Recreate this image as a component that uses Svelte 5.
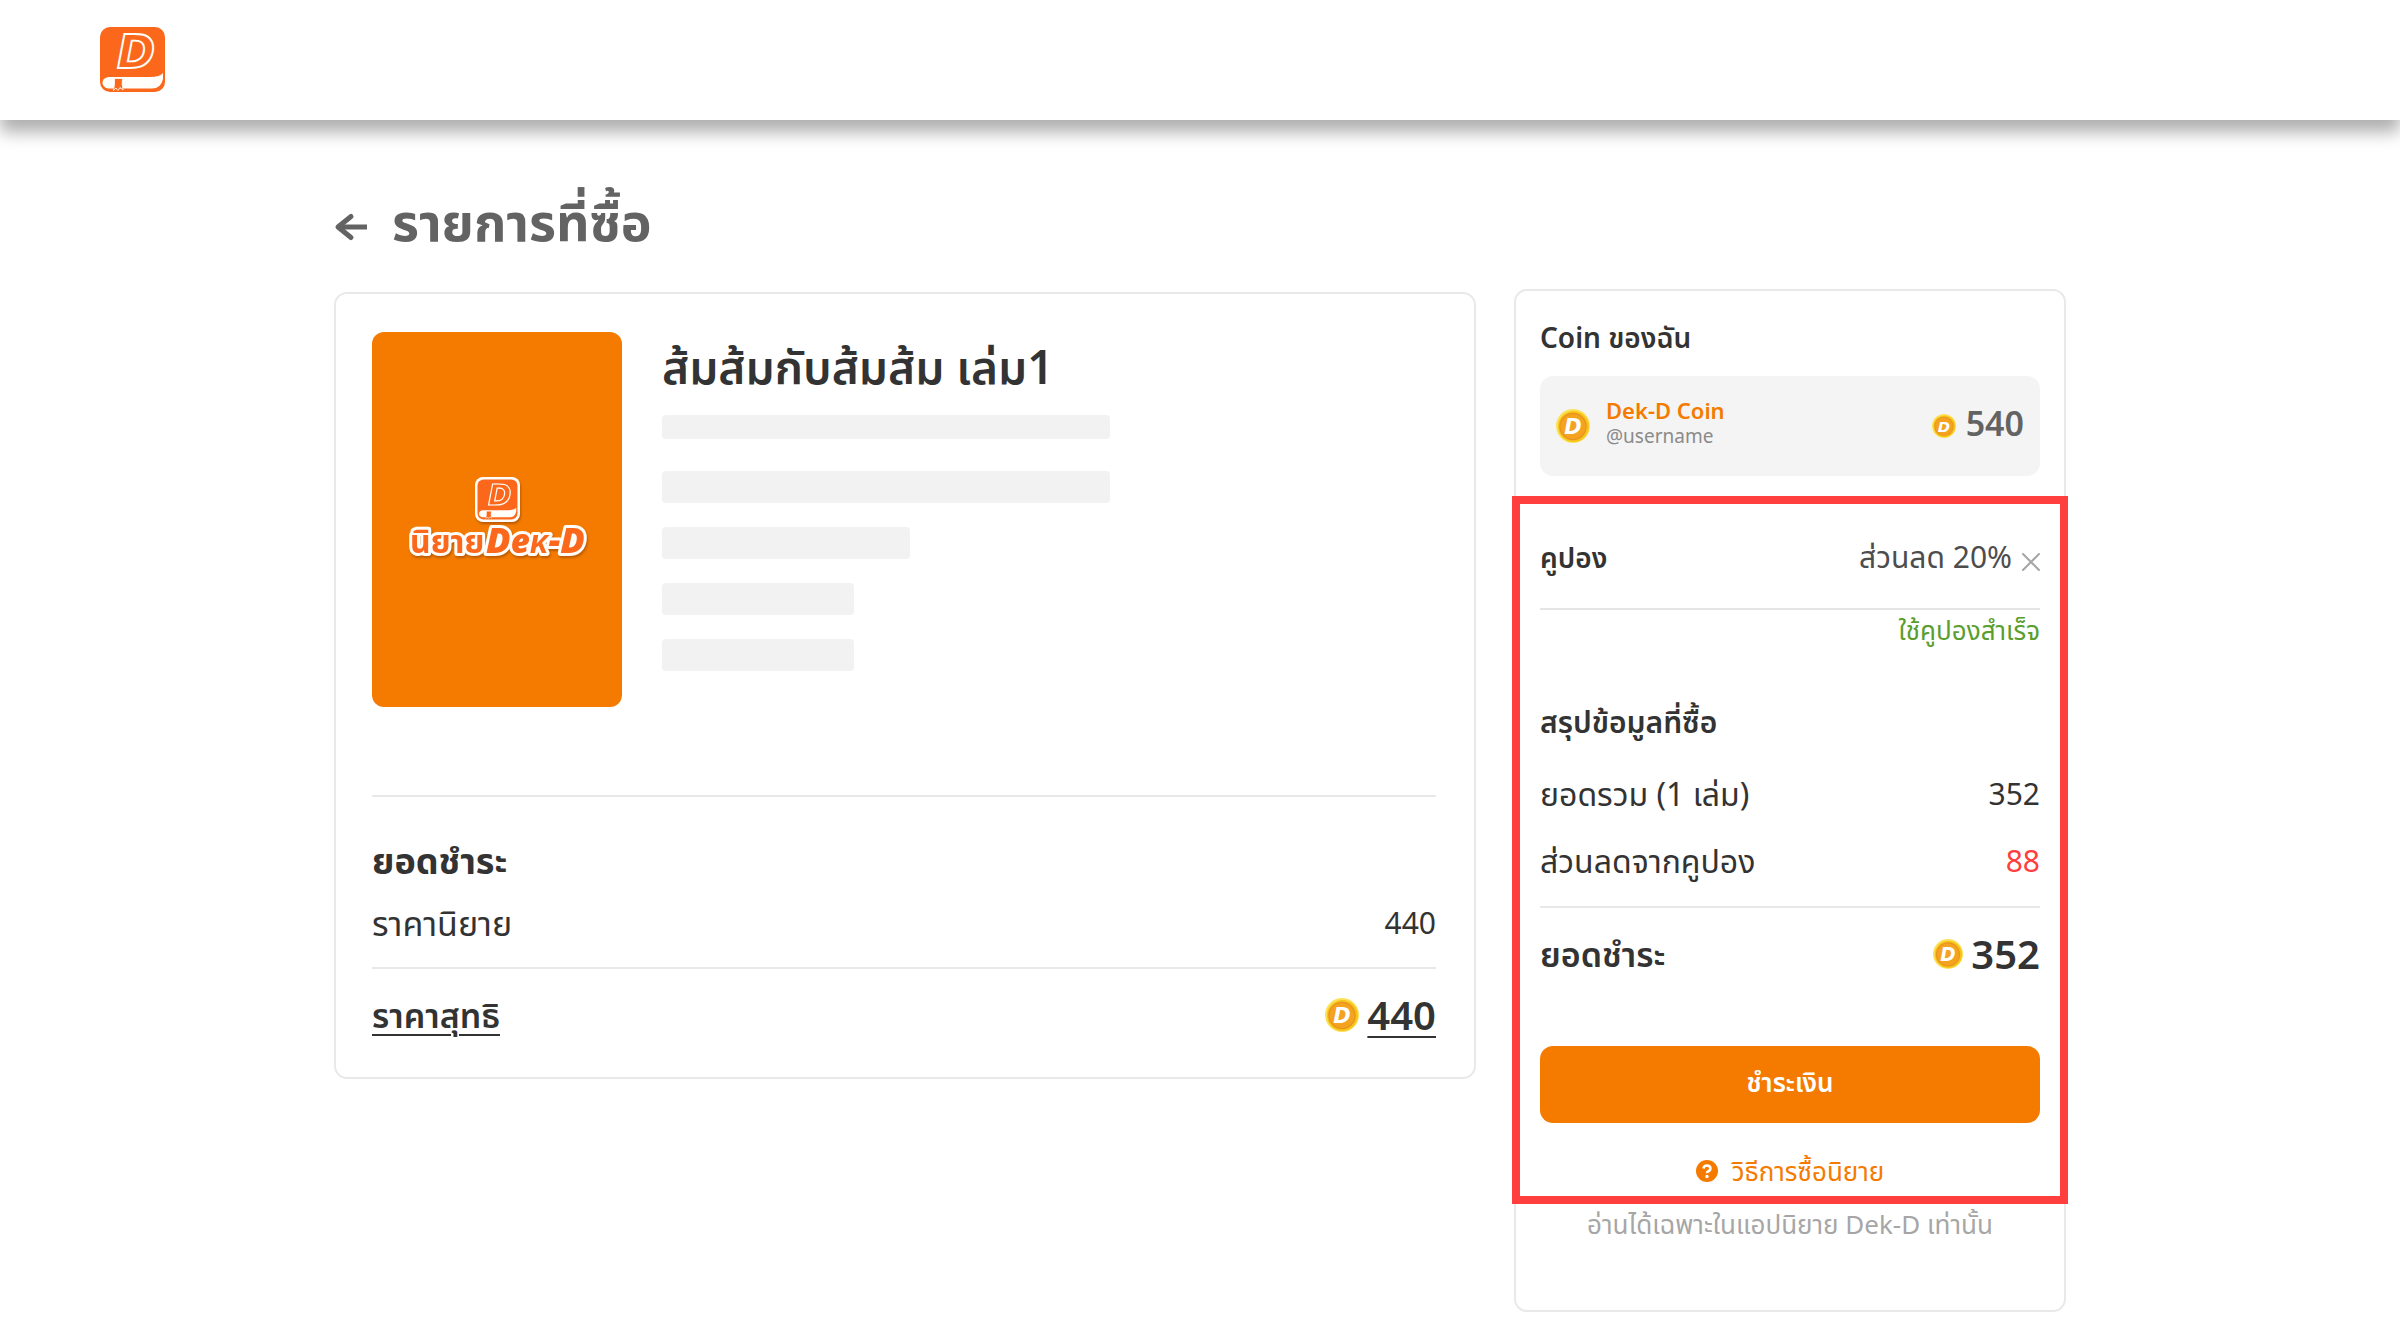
<script lang="ts">
  const placeholders = [
    { width: 448, slim: true },
    { width: 448, slim: false },
    { width: 248, slim: false },
    { width: 192, slim: false },
    { width: 192, slim: false },
  ];
</script>

{#snippet book()}
  <rect width="65" height="65" rx="10" fill="#fb671b" />
  <path d="M8 50H50Q60 50 63 46V52Q61 61.500 52 61.500H8Q2.500 60 2.500 55.700T8 50Z" fill="#fffefb" />
  <path d="M14.500 51.500H22.500Q21.500 57 23 63L20 60.500L18 63.500L16 61L13.500 63.500Q15 57 14.500 51.500Z" fill="#fb671b" stroke="#fffefb" stroke-width="0.800" />
  <text class="mark" x="17" y="41" font-size="46" fill="none" stroke="#fffefb" stroke-width="1.900">D</text>
{/snippet}

{#snippet coin(kind)}
  <svg class="coin {kind}" viewBox="0 0 34 34" aria-hidden="true">
    <circle cx="17" cy="17" r="17" fill="#fbe25a" />
    <circle cx="17.500" cy="17.500" r="15.500" fill="#f7c41c" />
    <circle cx="17" cy="17.500" r="13.700" fill="#e8941a" />
    <circle cx="17" cy="17.500" r="12.500" fill="#f4a21f" />
    <text class="mark" x="17" y="25" text-anchor="middle" font-size="21" fill="#fff">D</text>
  </svg>
{/snippet}

<header class="topbar">
  <a class="home" href="/" aria-label="Dek-D">
    <svg viewBox="0 0 65 65" aria-hidden="true">{@render book()}</svg>
  </a>
</header>

<main class="page">
  <div class="order">
    <div class="heading">
      <button class="back" type="button" aria-label="ย้อนกลับ">
        <svg viewBox="0 0 34 26" fill="none" stroke="#636363" stroke-width="5" stroke-linejoin="round" aria-hidden="true">
          <path d="M33 13H4" /><path d="M17 2.500L4 13L17 23.500" stroke-linecap="round" />
        </svg>
      </button>
      <h1>รายการที่ซื้อ</h1>
    </div>

    <section class="card details">
      <article class="book">
        <div class="cover">
          <svg viewBox="-3 5 200 110" role="img" aria-label="นิยาย Dek-D">
            <g class="sticker">
              <rect x="75" y="17" width="45" height="45" rx="8" fill="#fffefb" />
              <g transform="translate(77.500 19.500) scale(0.615)">{@render book()}</g>
              <text class="wordmark" x="10" y="93" font-size="32" font-weight="700">นิยาย</text>
              <text class="wordmark latin" x="86" y="93" font-size="36">D<tspan font-size="33">eᴋ</tspan>-D</text>
            </g>
          </svg>
        </div>
        <div class="info">
          <h2>ส้มส้มกับส้มส้ม เล่ม1</h2>
          {#each placeholders as bar}
            <div class="bar" class:slim={bar.slim} style="width: {bar.width}px"></div>
          {/each}
        </div>
      </article>

      <div class="payment">
        <h3>ยอดชำระ</h3>
        <div class="line price"><span>ราคานิยาย</span><span class="number">440</span></div>
        <div class="line net">
          <strong class="under">ราคาสุทธิ</strong>
          <span class="amount">{@render coin('large')}<strong class="total under">440</strong></span>
        </div>
      </div>
    </section>
  </div>

  <aside class="card summary">
    <h3 class="wallet-title">Coin ของฉัน</h3>
    <div class="wallet">
      {@render coin('large')}
      <div class="owner"><strong>Dek-D Coin</strong><span>@username</span></div>
      <span class="balance">{@render coin('small')}<strong>540</strong></span>
    </div>

    <section class="checkout">
      <div class="line coupon">
        <h3>คูปอง</h3>
        <span class="discount">ส่วนลด 20%
          <button type="button" aria-label="ลบคูปอง">
            <svg viewBox="0 0 18 18" stroke="#a6a6a6" stroke-width="2" stroke-linecap="round" aria-hidden="true"><path d="M1 1L17 17M17 1L1 17" /></svg>
          </button>
        </span>
      </div>
      <p class="applied">ใช้คูปองสำเร็จ</p>

      <h3 class="summary-title">สรุปข้อมูลที่ซื้อ</h3>
      <div class="line row"><span>ยอดรวม (1 เล่ม)</span><span class="number">352</span></div>
      <div class="line row"><span>ส่วนลดจากคูปอง</span><span class="number red">88</span></div>
      <div class="line due">
        <h3>ยอดชำระ</h3>
        <span class="amount">{@render coin('medium')}<strong class="total">352</strong></span>
      </div>
      <button class="pay" type="button">ชำระเงิน</button>
      <a class="help" href="#help">
        <svg viewBox="0 0 22 22" aria-hidden="true">
          <circle cx="11" cy="11" r="11" fill="#f47b00" />
          <path d="M7.500 8.500Q7.800 5.500 11 5.500T14.500 8.500Q14.500 10 12.700 11T11 13.200" fill="none" stroke="#fff" stroke-width="2.600" />
          <circle cx="11" cy="16.500" r="1.700" fill="#fff" />
        </svg>
        วิธีการซื้อนิยาย
      </a>
    </section>
    <p class="note">อ่านได้เฉพาะในแอปนิยาย Dek-D เท่านั้น</p>
  </aside>
</main>

<style>
  :global(body) {
    background: #fff;
    color: #333;
    font-family: "Noto Sans", "Noto Sans Thai", sans-serif;
    font-size: 28px;
    line-height: 40px;
  }
  h1, h2, h3, p { margin: 0; }
  h3 { font-size: 28px; font-weight: 600; }
  strong { font-weight: 600; }
  svg { display: block; flex: none; overflow: visible; }
  button { padding: 0; border: 0; background: none; font: inherit; color: inherit; cursor: pointer; }
  a { color: inherit; text-decoration: none; }

  .mark { font-family: "DejaVu Sans", sans-serif; font-weight: 700; font-style: italic; }
  .latin { font-family: "Open Sans", sans-serif; font-weight: 800; font-style: italic; }
  .topbar {
    display: flex;
    align-items: center;
    height: 120px;
    padding: 0 100px 2px;
    box-sizing: border-box;
    background: #fff;
    box-shadow: 0 12px 16px rgb(0 0 0 / 32%);
  }
  .home svg { width: 65px; height: 65px; }

  .page {
    display: grid;
    grid-template-columns: minmax(0, 1fr) 552px;
    gap: 38px;
    align-items: start;
    max-width: 1732px;
    margin: 0 auto;
  }
  .heading { display: flex; align-items: center; gap: 24px; height: 172px; padding-top: 42px; box-sizing: border-box; }
  .back svg { width: 34px; height: 26px; }
  h1 { padding-bottom: 12px; color: #636363; font-size: 52px; line-height: 72px; font-weight: 700; }

  .card { border: 2px solid #e9e9e9; border-radius: 13px; box-sizing: border-box; }
  .details { padding: 38px 38px 16px 36px; }
  .book { display: flex; gap: 40px; padding-bottom: 88px; border-bottom: 2px solid #e8e8e8; }
  .cover { display: flex; align-items: center; justify-content: center; width: 250px; height: 375px; border-radius: 12px; background: #f47b00; }
  .cover svg { width: 200px; height: 110px; }
  .sticker { filter: drop-shadow(1px 2px 1px rgb(120 50 0 / 45%)); }
  .wordmark { fill: #fb671b; stroke: #fffefb; stroke-width: 6px; stroke-linejoin: round; paint-order: stroke; }
  .info { flex: 1; }
  h2 { font-size: 46px; line-height: 68px; font-weight: 600; margin-bottom: 15px; }
  .bar { max-width: 100%; height: 32px; margin-bottom: 24px; border-radius: 4px; background: #f2f2f2; }
  .bar.slim { height: 24px; margin-bottom: 32px; }

  .line { display: flex; align-items: center; justify-content: space-between; }
  .payment { padding-top: 42px; font-size: 34px; }
  .payment h3 { font-size: 36px; line-height: 44px; font-weight: 700; }
  .price { height: 86px; padding-bottom: 4px; box-sizing: border-box; border-bottom: 2px solid #e8e8e8; }
  .number { font-size: 30px; }
  .net { height: 92px; }
  .under { text-decoration: underline; text-underline-offset: 6px; text-decoration-thickness: 2px; }
  .amount { display: flex; align-items: center; gap: 8px; }
  .total { font-size: 40px; line-height: 48px; }
  .coin.large { width: 34px; height: 34px; }
  .coin.medium { width: 30px; height: 30px; }
  .coin.small { width: 24px; height: 24px; }

  .summary { margin-top: 169px; padding: 26px 24px 66px; }
  .wallet-title { margin-bottom: 19px; }
  .wallet { display: flex; align-items: center; gap: 16px; height: 100px; padding: 0 16px; box-sizing: border-box; border-radius: 13px; background: #f4f4f4; }
  .owner { display: flex; flex: 1; flex-direction: column; padding-bottom: 8px; }
  .owner strong { color: #f47b00; font-size: 22px; line-height: 28px; }
  .owner span { color: #8a8a8a; font-size: 19px; line-height: 24px; }
  .balance { display: flex; align-items: center; gap: 10px; color: #636363; font-size: 34px; }
  .balance strong { padding-bottom: 6px; }

  .checkout { position: relative; margin-top: 20px; padding: 34px 0 13px; }
  .checkout::after { content: ""; position: absolute; inset: 0 -28px; border: 8px solid #ff3e3e; pointer-events: none; }
  .coupon { height: 80px; padding-bottom: 24px; box-sizing: border-box; border-bottom: 2px solid #e5e5e5; }
  .discount { display: flex; align-items: flex-end; gap: 10px; color: #4d4d4d; font-size: 30px; }
  .discount button { padding-bottom: 6px; }
  .discount svg { width: 18px; height: 18px; }
  .applied { color: #5a9e2d; font-size: 26px; text-align: right; }
  .summary-title { margin: 52px 0 18px; font-size: 30px; }
  .row { height: 67px; font-size: 32px; }
  .red { color: #ff3e3e; }
  .due { height: 92px; margin-top: 12px; border-top: 2px solid #e8e8e8; }
  .due h3 { font-size: 34px; }
  .pay { display: block; width: 100%; height: 77px; margin-top: 46px; padding-bottom: 5px; border-radius: 13px; background: #f47b00; color: #fff; font-size: 26px; font-weight: 600; }
  .help { display: flex; align-items: center; justify-content: center; gap: 14px; margin-top: 28px; color: #f47b00; font-size: 26px; }
  .help svg { width: 22px; height: 22px; }
  .note { color: #a6a6a6; font-size: 26px; text-align: center; }
</style>
